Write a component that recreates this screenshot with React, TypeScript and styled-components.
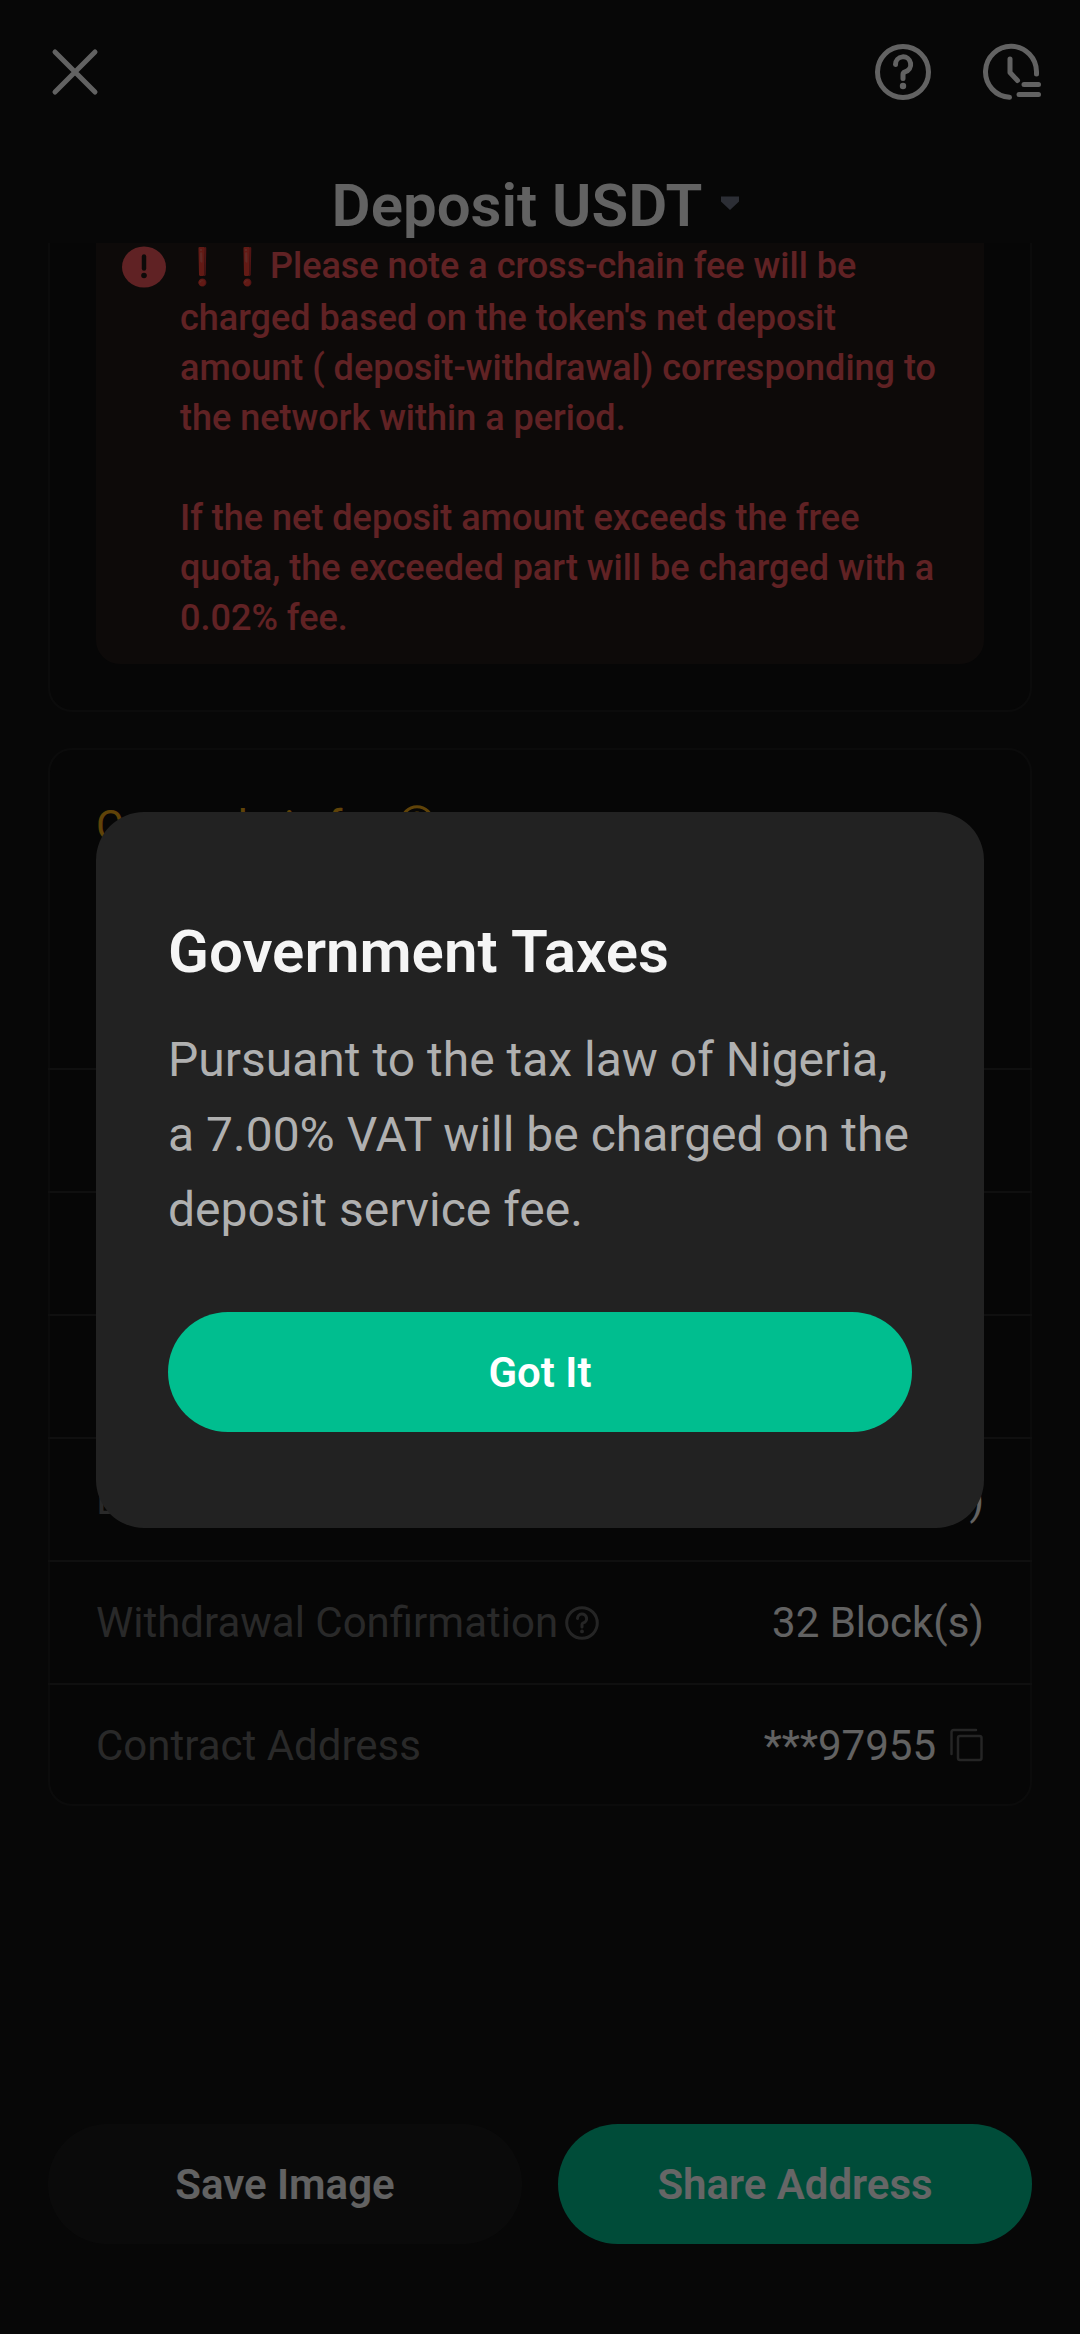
import React from "react";
import styled, { createGlobalStyle } from "styled-components";

const GlobalStyle = createGlobalStyle`
  * { box-sizing: border-box; }
  body {
    margin: 0;
    background: #121212;
    font-family: Roboto, "Noto Sans", sans-serif;
    color: #f5f5f5;
  }
  h1, h2, p, dl, dt, dd { margin: 0; font-weight: 400; }
`;

const Page = styled.div`
  min-height: 100vh;
  display: flex;
  flex-direction: column;
`;

const Toolbar = styled.nav`
  height: 144px;
  padding: 0 39px 0 45px;
  display: flex;
  align-items: center;
  justify-content: space-between;
`;

const ToolbarGroup = styled.div`
  display: flex;
  gap: 48px;
`;

const IconButton = styled.button<{ $size: number; $color?: string }>`
  width: ${(p) => p.$size}px;
  height: ${(p) => p.$size}px;
  padding: 0;
  border: 0;
  flex: none;
  background: none;
  color: ${(p) => p.$color ?? "#f5f5f5"};
  svg { display: block; width: 100%; height: 100%; }
`;

const TitleBar = styled.header`
  padding-top: 24px;
  display: flex;
  justify-content: center;
`;

const TokenButton = styled.button`
  display: flex;
  align-items: center;
  gap: 10px;
  padding: 0;
  border: 0;
  background: none;
  color: #f5f5f5;
  font: inherit;
`;

const Title = styled.h1`
  font-size: 60px;
  line-height: 75px;
  font-weight: 600;
`;

const Caret = styled.svg`
  width: 36px;
  height: 36px;
`;

const Scroller = styled.main`
  flex: 1;
  overflow: hidden;
`;

const Stack = styled.div`
  margin-top: -24px;
  padding: 0 48px 48px;
  display: flex;
  flex-direction: column;
  gap: 36px;
`;

const Card = styled.section`
  border: 2px solid #1d1d1d;
  border-radius: 24px;
  background: #0f0f0f;
`;

const NoticeCard = styled(Card)`
  padding: 0 46px 46px;
`;

const Notice = styled.div`
  display: flex;
  gap: 14px;
  padding: 20px 36px 21px 26px;
  border-radius: 0 0 24px 24px;
  background: #221a18;
  color: #f0565a;
`;

const NoticeIcon = styled.svg`
  flex: none;
  width: 44px;
  height: 52px;
`;

const NoticeText = styled.div`
  font-size: 36px;
  line-height: 50px;
  p { font-weight: 500; }
  p + p { margin-top: 50px; }
`;

const Bang = styled.span`
  display: inline-block;
  width: 45px;
  line-height: 52px;
  text-align: center;
  vertical-align: top;
  color: #fb4a3c;
`;

const FeeSection = styled.div`
  height: 318px;
  padding: 54px 46px;
`;

const FeeLabel = styled.div`
  display: flex;
  align-items: flex-start;
  gap: 12px;
  font-size: 42px;
  line-height: 44px;
  color: #f0a916;
`;

const Details = styled.dl`
  && { margin: 0 -2px -2px; }
`;

const Row = styled.div`
  height: 123px;
  padding: 0 48px;
  border-top: 2px solid #262626;
  display: flex;
  align-items: center;
  justify-content: space-between;
  font-size: 42px;
  line-height: 48px;
`;

const Label = styled.dt`
  display: flex;
  align-items: center;
  gap: 6px;
  color: #666666;
`;

const Value = styled.dd`
  display: flex;
  align-items: center;
  gap: 12px;
`;

const Footer = styled.footer`
  display: flex;
  gap: 36px;
  padding: 0 48px 90px;
`;

const Button = styled.button<{ $primary?: boolean }>`
  flex: 1;
  height: 120px;
  padding: 0;
  border: 0;
  border-radius: 60px;
  background: ${(p) => (p.$primary ? "#00be8f" : "#1b1b1b")};
  color: ${(p) => (p.$primary ? "#ffffff" : "#f5f5f5")};
  font-family: inherit;
  font-size: 42px;
  font-weight: 600;
`;

const Backdrop = styled.div`
  position: fixed;
  inset: 0;
  padding: 6px 96px 0;
  display: flex;
  align-items: center;
  background: rgba(0, 0, 0, 0.6);
`;

const Modal = styled.div`
  flex: 1;
  display: flex;
  flex-direction: column;
  padding: 96px 72px;
  border-radius: 48px;
  background: #222222;
`;

const ModalTitle = styled.h2`
  font-size: 60px;
  line-height: 88px;
  font-weight: 600;
`;

const ModalText = styled.p`
  margin: 26px 0 65px;
  font-size: 48px;
  line-height: 75px;
  color: #b0b0b0;
`;

const ModalButton = styled(Button)`
  flex: none;
`;

const HelpGlyph = () => (
  <svg viewBox="0 0 60 60" fill="none" stroke="currentColor" strokeWidth="5" strokeLinecap="round" strokeLinejoin="round">
    <circle cx="30" cy="30" r="25.5" />
    <path d="M22.500 22.500A7.600 7.600 0 1 1 32 29.800Q30 30.500 30 32.500V36.500" />
    <circle cx="30" cy="44" r="3.200" fill="currentColor" stroke="none" />
  </svg>
);

const rows = [
  { id: "minimum", label: "", value: "" },
  { id: "arrival", label: "", value: "" },
  { id: "account", label: "", value: "" },
  { id: "deposit", label: "Deposit Confirmation", value: "Block(s)" },
  { id: "withdrawal", label: "Withdrawal Confirmation", value: "32 Block(s)", help: true },
  { id: "contract", label: "Contract Address", value: "***97955", copy: true },
];

export default function App() {
  return (
    <>
      <GlobalStyle />
      <Page>
        <Toolbar>
          <IconButton $size={60} aria-label="Close">
            <svg viewBox="0 0 60 60" fill="none" stroke="currentColor" strokeWidth="5" strokeLinecap="round">
              <path d="M10 10 50 50M50 10 10 50" />
            </svg>
          </IconButton>
          <ToolbarGroup>
            <IconButton $size={60} aria-label="Help">
              <HelpGlyph />
            </IconButton>
            <IconButton $size={60} aria-label="History">
              <svg viewBox="0 0 60 60" fill="none" stroke="currentColor" strokeWidth="5" strokeLinecap="round" strokeLinejoin="round">
                <path d="M55.500 32V30A25.500 25.500 0 1 0 28.500 55.300" />
                <path d="M29 17V30.500L36.500 38.500" />
                <path d="M43 42.500H57.500M38 52.500H57.500" />
              </svg>
            </IconButton>
          </ToolbarGroup>
        </Toolbar>
        <TitleBar>
          <TokenButton>
            <Title>Deposit USDT</Title>
            <Caret viewBox="0 0 36 36" aria-hidden="true">
              <path d="M9 8.500H27V13.500L18 22 9 13.500Z" fill="#6e7385" />
            </Caret>
          </TokenButton>
        </TitleBar>
        <Scroller>
          <Stack>
            <NoticeCard>
              <Notice>
                <NoticeIcon viewBox="0 0 44 52" aria-hidden="true">
                  <ellipse cx="22" cy="26" rx="22" ry="20.500" fill="#f0565a" />
                  <path d="M22 15.500V27.500" stroke="#221a18" strokeWidth="4.500" strokeLinecap="round" />
                  <circle cx="22" cy="34.500" r="2.800" fill="#221a18" />
                </NoticeIcon>
                <NoticeText>
                  <p>
                    <Bang>❗</Bang>
                    <Bang>❗</Bang>
                    Please note a cross-chain fee will be charged based on the token's net deposit
                    amount ( deposit-withdrawal) corresponding to the network within a period.
                  </p>
                  <p>
                    If the net deposit amount exceeds the free quota, the exceeded part will be
                    charged with a 0.02% fee.
                  </p>
                </NoticeText>
              </Notice>
            </NoticeCard>
            <Card>
              <FeeSection>
                <FeeLabel>
                  Cross-chain fee
                  <IconButton $size={36} $color="#f0a916" aria-label="About the cross-chain fee">
                    <HelpGlyph />
                  </IconButton>
                </FeeLabel>
              </FeeSection>
              <Details>
                {rows.map((row) => (
                  <Row key={row.id}>
                    <Label>
                      {row.label}
                      {row.help && (
                        <IconButton $size={36} $color="#5c5c5c" aria-label="About withdrawal confirmation">
                          <HelpGlyph />
                        </IconButton>
                      )}
                    </Label>
                    <Value>
                      {row.value}
                      {row.copy && (
                        <IconButton $size={36} $color="#5c5c5c" aria-label="Copy contract address">
                          <svg viewBox="0 0 36 36" fill="none" stroke="currentColor" strokeWidth="2.500" strokeLinecap="round">
                            <rect x="10" y="8" width="23.500" height="24" rx="2" />
                            <path d="M3.500 26V4A2 2 0 0 1 5.500 2H28" />
                          </svg>
                        </IconButton>
                      )}
                    </Value>
                  </Row>
                ))}
              </Details>
            </Card>
          </Stack>
        </Scroller>
        <Footer>
          <Button>Save Image</Button>
          <Button $primary>Share Address</Button>
        </Footer>
      </Page>
      <Backdrop>
        <Modal role="dialog" aria-modal="true" aria-labelledby="tax-title">
          <ModalTitle id="tax-title">Government Taxes</ModalTitle>
          <ModalText>
            Pursuant to the tax law of Nigeria, a 7.00% VAT will be charged on the deposit service fee.
          </ModalText>
          <ModalButton $primary>Got It</ModalButton>
        </Modal>
      </Backdrop>
    </>
  );
}
